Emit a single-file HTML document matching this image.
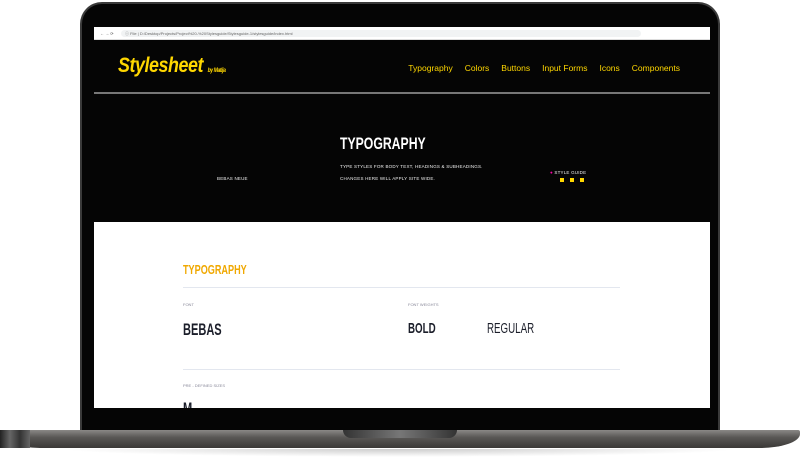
<!DOCTYPE html>
<html><head><style>
*{margin:0;padding:0;box-sizing:border-box}
body{width:800px;height:466px;background:#fff;position:relative;overflow:hidden;font-family:"Liberation Sans",sans-serif}
.bezel{position:absolute;left:80px;top:2px;width:640px;height:432px;background:#050505;border-radius:22px 22px 0 0;border:2px solid #3a3a3a;border-bottom:none}
.screen{position:absolute;left:94px;top:27px;width:616px;height:381px;background:#fff;overflow:hidden}
.bar{height:13px;background:#fff;border-bottom:1px solid #ddd;font-size:4px;color:#555;padding:4px 0 0 6px;position:relative}
.url{position:absolute;left:27px;top:3px;width:520px;height:7px;background:#f1f3f4;border-radius:4px;font-size:4px;line-height:7px;padding-left:4px;color:#666}
.hdr{height:54px;background:#050505;position:relative;border-bottom:2px solid #777}
.logo{position:absolute;left:24px;top:14px;color:#ffd700;font:bold 21px "Liberation Sans",sans-serif;font-style:italic;letter-spacing:-.5px;transform:scaleX(.85);transform-origin:left}
.logo small{font-size:6px}
.nav{position:absolute;right:30px;top:23px;color:#ffd700;font-size:8.5px}
.nav span{margin-left:12px}
.hero{height:128px;background:#050505;position:relative;color:#fff}
.t{position:absolute;left:246px;top:40px;font:bold 17px "Liberation Sans Narrow","Liberation Sans",sans-serif;transform:scaleX(.72);transform-origin:left}
.s{position:absolute;font-size:4.5px;letter-spacing:.2px;color:#eee}
.dot{position:absolute;width:4px;height:4px;background:#ffd700}
.ttl{color:#f0a800;font:bold 13px "Liberation Sans",sans-serif;transform:scaleX(.7);transform-origin:left}
.hr{height:1px;background:#e3e7ef}
.lbl{font-size:4px;color:#889}
.big{font:bold 17px "Liberation Sans",sans-serif;color:#1b1e2a;transform:scaleX(.65);transform-origin:left;position:absolute}
.base{position:absolute;left:0;top:430px;width:800px;height:18px;background:linear-gradient(#8a8886,#5a5856 40%,#3a3836);border-radius:2px 2px 40px 40px/2px 2px 14px 14px}
.base:before{content:"";position:absolute;left:0;top:0;width:30px;height:100%;background:linear-gradient(90deg,#222,#666,#333,#666)}
.notch{position:absolute;left:343px;top:430px;width:114px;height:8px;background:linear-gradient(90deg,#333,#777,#333);border-radius:0 0 8px 8px}
.shadow{position:absolute;left:60px;top:449px;width:680px;height:8px;background:radial-gradient(ellipse at top,#ccc,#fff 70%)}
</style></head><body>
<div class="bezel"></div>
<div class="screen">
 <div class="bar">← → ⟳<div class="url">ⓘ File | D:/Desktop/Projects/Project%20-%20Stylesguide/Stylesguide-1/stylesguide/index.html</div></div>
 <div class="hdr"><div class="logo">Stylesheet <small>by Matija</small></div>
 <div class="nav"><span>Typography</span><span>Colors</span><span>Buttons</span><span>Input Forms</span><span>Icons</span><span>Components</span></div></div>
 <div class="hero">
  <div class="t">TYPOGRAPHY</div>
  <div class="s" style="left:123px;top:82px">BEBAS NEUE</div>
  <div class="s" style="left:246px;top:70px">TYPE STYLES FOR BODY TEXT, HEADINGS &amp; SUBHEADINGS.</div>
  <div class="s" style="left:246px;top:82px">CHANGES HERE WILL APPLY SITE WIDE.</div>
  <div class="s" style="left:456px;top:76px"><span style="color:#f0a">●</span> STYLE GUIDE</div>
  <div class="dot" style="left:466px;top:84px"></div><div class="dot" style="left:476px;top:84px"></div><div class="dot" style="left:486px;top:84px"></div>
 </div>
 <div style="position:absolute;left:89px;top:195px;width:437px;height:190px">
  <div class="ttl" style="position:absolute;top:40px">TYPOGRAPHY</div>
  <div class="hr" style="position:absolute;top:65px;width:437px"></div>
  <div class="lbl" style="position:absolute;top:80px">FONT</div>
  <div class="lbl" style="position:absolute;top:80px;left:225px">FONT WEIGHTS</div>
  <div class="big" style="top:98px">BEBAS</div>
  <div class="big" style="top:98px;left:225px;font-size:15px">BOLD</div>
  <div class="big" style="top:98px;left:304px;font-size:15px;font-weight:normal">REGULAR</div>
  <div class="hr" style="position:absolute;top:147px;width:437px"></div>
  <div class="lbl" style="position:absolute;top:161px">PRE - DEFINED SIZES</div>
  <div class="big" style="top:177px">M</div>
 </div>
</div>
<div class="base"></div>
<div class="notch"></div>
<div class="shadow"></div>
</body></html>
